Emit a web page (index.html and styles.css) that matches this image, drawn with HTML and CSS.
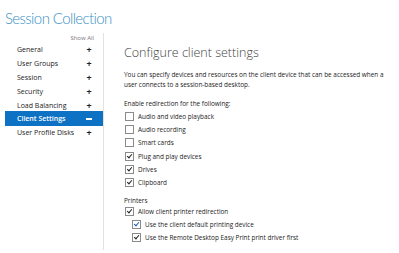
FILE: index.html
```html
<!DOCTYPE html>
<html>
<head>
<meta charset="utf-8">
<link rel="stylesheet" href="styles.css">
</head>
<body>
<div class="app">
  <h1 class="title">Session Collection</h1>
  <div class="layout">
    <nav class="sidebar">
      <div class="show-all">Show All</div>
      <ul class="nav">
        <li class="nav-item"><span>General</span><span class="sign">+</span></li>
        <li class="nav-item"><span>User Groups</span><span class="sign">+</span></li>
        <li class="nav-item"><span>Session</span><span class="sign">+</span></li>
        <li class="nav-item"><span>Security</span><span class="sign">+</span></li>
        <li class="nav-item"><span>Load Balancing</span><span class="sign">+</span></li>
        <li class="nav-item active"><span>Client Settings</span><span class="sign minus"></span></li>
        <li class="nav-item"><span>User Profile Disks</span><span class="sign">+</span></li>
      </ul>
    </nav>
    <main class="content">
      <h2 class="heading">Configure client settings</h2>
      <p class="desc">You can specify devices and resources on the client device that can be accessed when a user connects to a session-based desktop.</p>
      <p class="label">Enable redirection for the following:</p>
      <ul class="checks">
        <li class="check"><span class="box"></span>Audio and video playback</li>
        <li class="check"><span class="box"></span>Audio recording</li>
        <li class="check"><span class="box"></span>Smart cards</li>
        <li class="check"><span class="box on"></span>Plug and play devices</li>
        <li class="check"><span class="box on"></span>Drives</li>
        <li class="check"><span class="box on"></span>Clipboard</li>
      </ul>
      <p class="label printers">Printers</p>
      <ul class="checks printer-list">
        <li class="check"><span class="box on"></span>Allow client printer redirection</li>
        <li class="check sub"><span class="box on blue"></span>Use the client default printing device</li>
        <li class="check sub"><span class="box on"></span>Use the Remote Desktop Easy Print print driver first</li>
      </ul>
    </main>
  </div>
</div>
</body>
</html>
```
FILE: styles.css
```css
html, body {
  margin: 0;
  padding: 0;
  background: #ffffff;
}
body {
  width: 399px;
  height: 253px;
  overflow: hidden;
  font-family: "Open Sans", "Noto Sans", sans-serif;
  color: #222;
}
.app {
  display: flex;
  flex-direction: column;
  height: 253px;
}
.title {
  margin: 0;
  padding: 8px 0 0 5px;
  font-family: Lato, "Open Sans", sans-serif;
  font-size: 15px;
  line-height: 20px;
  font-weight: 300;
  color: #3a90c4;
  letter-spacing: -0.6px;
}
.layout {
  display: flex;
  flex: 1;
  padding-top: 5px;
}
.sidebar {
  margin-left: 5px;
  width: 98px;
  border-right: 1px solid #e2e2e2;
  margin-bottom: 3px;
}
.show-all {
  font-size: 6px;
  line-height: 10px;
  color: #777;
  text-align: right;
  padding-right: 9px;
}
.nav {
  list-style: none;
  margin: 0;
  padding: 0;
}
.nav-item {
  display: flex;
  justify-content: space-between;
  align-items: center;
  height: 13.8px;
  padding: 0 11px 0 12px;
  font-size: 7px;
  color: #222;
}
.nav-item.active {
  background: #0e72c4;
  color: #ffffff;
  font-weight: 600;
  height: 15px;
  margin: -0.6px 0;
}
.sign {
  font-size: 9px;
  font-weight: 700;
  width: 6px;
  text-align: center;
}
.sign.minus {
  display: block;
  width: 6px;
  height: 1.5px;
  background: #fff;
}
.content {
  flex: 1;
  padding-left: 20px;
  padding-top: 12px;
}
.heading {
  margin: 0;
  font-size: 12.5px;
  line-height: 15px;
  font-weight: 300;
  color: #444;
}
.desc {
  margin: 10px 0 0;
  font-size: 6.4px;
  line-height: 9.5px;
  color: #222;
  width: 265px;
}
.label {
  margin: 10px 0 0;
  font-size: 6.4px;
  line-height: 9px;
  color: #222;
}
.label.printers {
  margin-top: 7px;
}
.checks {
  list-style: none;
  margin: 2px 0 0;
  padding: 0;
}
.checks.printer-list {
  margin-top: 0;
}
.check {
  display: flex;
  align-items: center;
  height: 13.2px;
  font-size: 6.4px;
  color: #222;
}
.printer-list .check {
  height: 13px;
}
.check.sub {
  padding-left: 7px;
}
.box {
  width: 7px;
  height: 7px;
  border: 1px solid #8a8a8a;
  background: #fff;
  margin: 0 4px 0 1px;
  position: relative;
  flex: none;
}
.box.on::after {
  content: "";
  position: absolute;
  left: 2px;
  top: 0px;
  width: 2px;
  height: 4px;
  border: solid #222;
  border-width: 0 1.3px 1.3px 0;
  transform: rotate(40deg);
}
.box.blue::after {
  border-color: #1b5fa8;
}
```
